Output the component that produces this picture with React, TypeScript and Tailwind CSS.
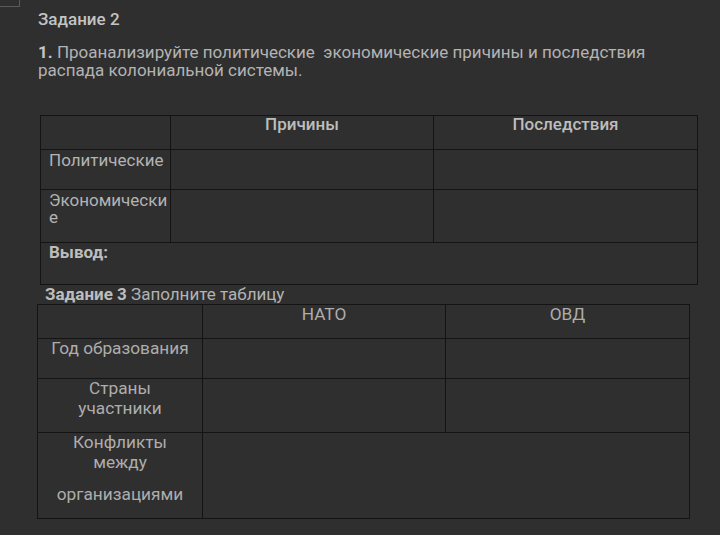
export default function App() {
  const cell = "border border-[#141414] align-top p-0";
  return (
    <div
      className="w-[720px] h-[535px] bg-[#2f2f2f] overflow-hidden text-[17px] leading-[18px] text-[#b3b3b3]"
      style={{ fontFamily: "Roboto, 'Noto Sans', sans-serif" }}
    >
      <div className="w-[20px] h-[7px] border-r border-b border-[#5a5a5a]" />
      <div className="pl-[38px]">
        <div className="mt-[2px] font-medium text-[#c4c4c4] leading-[20px]">Задание 2</div>
        <p className="mt-[14px] w-[640px]">
          <span className="font-bold text-[#c4c4c4]">1.</span> Проанализируйте политические&nbsp; экономические причины и последствия распада колониальной системы.
        </p>
      </div>

      <table className="ml-[40px] mt-[36px] w-[658px] table-fixed border-collapse">
        <colgroup>
          <col className="w-[130px]" />
          <col className="w-[263px]" />
          <col />
        </colgroup>
        <tbody>
          <tr className="h-[34px]">
            <td className={cell}></td>
            <td className={`${cell} text-center font-medium text-[#bdbdbd]`}>
              <div className="-mt-[1px]">Причины</div>
            </td>
            <td className={`${cell} text-center font-medium text-[#bdbdbd]`}>
              <div className="-mt-[1px]">Последствия</div>
            </td>
          </tr>
          <tr className="h-[40px]">
            <td className={cell}>
              <div className="pt-[1px] pl-[8px]">Политические</div>
            </td>
            <td className={cell}></td>
            <td className={cell}></td>
          </tr>
          <tr className="h-[53px]">
            <td className={cell}>
              <div className="pt-[2px] pl-[8px] break-all leading-[17px]">Экономические</div>
            </td>
            <td className={cell}></td>
            <td className={cell}></td>
          </tr>
          <tr className="h-[42px]">
            <td className={cell} colSpan={3}>
              <div className="pt-0 pl-[8px] font-bold text-[#bdbdbd]">Вывод:</div>
            </td>
          </tr>
        </tbody>
      </table>

      <div className="ml-[45px] mt-0 h-[19px]">
        <span className="font-bold text-[#bdbdbd]">Задание 3</span> Заполните таблицу
      </div>

      <table className="ml-[37px] w-[653px] table-fixed border-collapse text-center text-[17.25px] text-[#adadad]">
        <colgroup>
          <col className="w-[165px]" />
          <col className="w-[243px]" />
          <col />
        </colgroup>
        <tbody>
          <tr className="h-[34px]">
            <td className={cell}></td>
            <td className={cell}>
              <div className="pt-0">НАТО</div>
            </td>
            <td className={cell}>
              <div className="pt-0">ОВД</div>
            </td>
          </tr>
          <tr className="h-[40px]">
            <td className={cell}>
              <div className="pt-0">Год образования</div>
            </td>
            <td className={cell}></td>
            <td className={cell}></td>
          </tr>
          <tr className="h-[54px]">
            <td className={cell}>
              <div className="leading-[20px] -mt-[1px]">
                Страны
                <br />
                участники
              </div>
            </td>
            <td className={cell}></td>
            <td className={cell}></td>
          </tr>
          <tr className="h-[86px]">
            <td className={cell}>
              <div className="leading-[20px] -mt-[1px]">
                Конфликты
                <br />
                между
              </div>
              <div className="leading-[20px] mt-[12px]">организациями</div>
            </td>
            <td className={cell} colSpan={2}></td>
          </tr>
        </tbody>
      </table>
    </div>
  );
}
